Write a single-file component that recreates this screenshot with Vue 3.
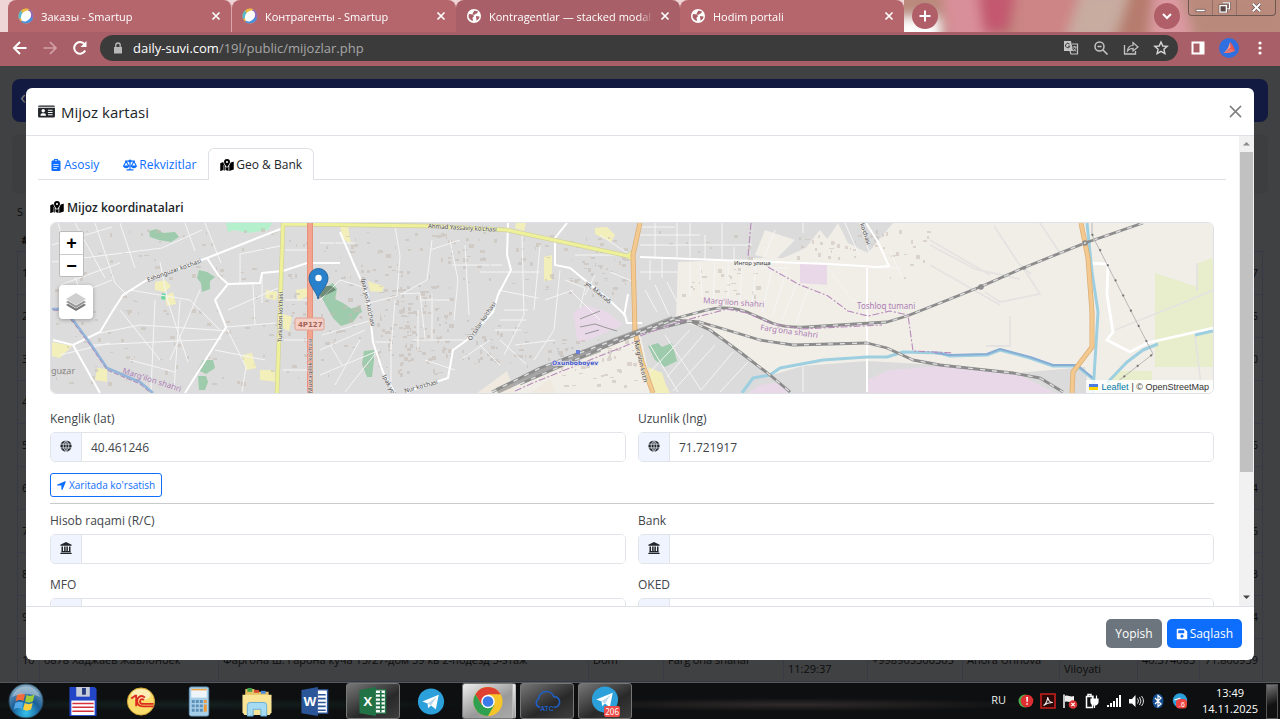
<script setup>
import { ref } from 'vue'

const tabs = [
  { title: 'Заказы - Smartup', icon: 'ring' },
  { title: 'Контрагенты - Smartup', icon: 'ring' },
  { title: 'Kontragentlar — stacked modal (', icon: 'globe', active: true },
  { title: 'Hodim portali', icon: 'globe' },
]

const lastDigits = ['7', '5', '0', '', '6', '4', '6', '3', '4']

const lat = ref('40.461246')
const lng = ref('71.721917')
const account = ref('')
const bank = ref('')
const mfo = ref('')
const oked = ref('')

const glyphs = {
  card: 'M1.5 1.5h15A1.5 1.5 0 0 1 18 3H0a1.5 1.5 0 0 1 1.500-1.500zM0 4h18v9a1.500 1.500 0 0 1-1.500 1.500h-15A1.500 1.500 0 0 1 0 13zM5.500 5.300a1.900 1.900 0 1 0 0 3.800 1.900 1.900 0 0 0 0-3.800zM2.500 12.500h6c0-1.700-1-2.600-2.200-2.600H4.700c-1.200 0-2.200.9-2.200 2.600zM10.500 6v1.200h5V6zm0 2.400v1.200h5V8.400zm0 2.400V12h5v-1.200z',
  clip: 'M5 2a3 3 0 0 1 6 0h1.500A1.500 1.500 0 0 1 14 3.500v11a1.500 1.500 0 0 1-1.500 1.500h-9A1.500 1.500 0 0 1 2 14.500v-11A1.500 1.500 0 0 1 3.500 2zm3-1a1 1 0 1 0 0 2 1 1 0 0 0 0-2zM4.500 7v1h7V7zm0 2.700v1h7v-1zm0 2.700v1h5v-1z',
  map: 'M9 0a4 4 0 0 1 4 4c0 1.800-2.400 5-3.500 6.300a.6.6 0 0 1-1 0C7.400 9 5 5.800 5 4a4 4 0 0 1 4-4zm0 2.600a1.400 1.400 0 1 0 0 2.800 1.400 1.400 0 0 0 0-2.800zM0 5.500l4-1.600c.2 1.700 1.100 3.200 2 4.600v7L4.500 15V8L4 7.500v7L.6 16a.5.5 0 0 1-.6-.5zM7 10c1.200 1.800 2.800 1.800 4 0v6l-4-1.200zM12 8.500c.8-1.300 1.500-2.400 1.900-3.700l3.500-1.300a.5.5 0 0 1 .6.500v10L12 16z',
  bank: 'M8 0l7.500 3.500V5H.5V3.500zM2 6h2v6h1.500V6h2v6h1V6h2v6H12V6h2v6.500l1 1V14H1v-.5l1-1zM.5 14.600h15V16H.5z',
  arrow: 'M15.600 1.700L10 15.200c-.5 1.200-2.200.8-2.200-.5V8.200H1.300c-1.300 0-1.700-1.700-.5-2.200L14.300.4c.9-.3 1.700.5 1.300 1.300z',
  save: 'M2.300 1h9l3.700 3.700v9A1.300 1.300 0 0 1 13.700 15H2.300A1.300 1.300 0 0 1 1 13.700V2.300A1.300 1.300 0 0 1 2.300 1zM3 3v4h8V3zm5 5.800a2.100 2.100 0 1 0 0 4.200 2.100 2.100 0 0 0 0-4.200z',
}

// Small repeatable noise for the building footprints on the map.
let seed = 41
const rand = () => {
  seed = (seed * 16807) % 2147483647
  return seed / 2147483647
}
const blocks = [
  [55, 226, 220, 160, 120],
  [285, 230, 24, 155, 25],
  [320, 232, 45, 150, 50],
  [375, 285, 75, 90, 150],
  [365, 232, 130, 50, 60],
  [510, 235, 115, 60, 70],
  [460, 320, 70, 45, 40],
  [545, 335, 90, 50, 60],
  [640, 228, 110, 30, 10],
  [678, 268, 80, 28, 26],
  [795, 230, 100, 28, 30],
  [870, 230, 60, 50, 20],
]
const buildings = blocks.flatMap(([x, y, w, h, n]) =>
  Array.from({ length: n }, () => ({
    x: Math.round(x + rand() * w),
    y: Math.round(y + rand() * h),
    w: Math.round(1 + rand() * 4),
    h: Math.round(1 + rand() * 3),
  })),
)

const lanes = [
  'M58 223l12 40 18 50M75 223l30 55M95 223l20 60 12 12M120 223l15 45M52 245l60-18M52 262l110-14 40-18M60 285l60-22M62 300l50-20M185 223l10 28M205 223l16 40M160 262l8 40 20 60M130 290l60 10 30 30M100 333l40-8 90 6M92 345l130-6M155 300l-4 90M120 310l40 50M180 300l-6 90M200 290l-30 70M226 327l50-4M226 327l20 40-4 25M215 350l50 10M228 310l50-22M240 284v-30l40-8M253 284l2 40M262 273v30M130 360l45 12M60 355l50-12',
  'M285 250h25M285 300h24M284 340h25M283 370h26M320 243h35M320 300l20-20 26 8M322 335l50-15M320 350l45-20M320 375l60-25M335 385l25-45M345 392l30-38M330 345l12 20',
  'M395 226l5 30-3 40-32 8M432 240l-5 40-25 14M450 240l8 40-4 40M465 245l4 70M400 294l20-1 5 45M420 300h30M413 340h55M418 310v40M432 294v45M375 342h16v40M395 300l-4 50M430 250l30-10M452 265h50M425 360l30 10M480 272h60M522 235l2 80-20 40M540 245l-6 65M498 290l40 8M504 310h24M500 320h26M495 330h26M560 270l-6 60-20 30M565 280l20 8-5 20M570 290l30 30M545 300l28-10M575 255h55M600 235l30 20M610 272l24 10M595 275l-10 20M480 345l20 20M500 340l26 24M515 345l40-5M460 360l30-20',
  'M640 227h35M640 235h60M640 245h112M655 223v34M677 223v34M690 223v34M705 235v24M722 223v36M734 247v14M640 272h38M650 260v20M662 258v20M645 290l12 22M655 285l14 30M667 282l10 20M650 345l28 47M665 335l36 55M690 330l-40 42M703 335l-36 42M715 345l-42 46M733 352l-32 38M748 362l-28 30',
  'M690 262v35M700 262l2 35M715 262l-2 36M728 262v36M742 262l-2 40M756 262l-4 44M772 268l-10 44M786 272l-14 46M798 280l-16 40M808 290l-12 33M760 268h30M845 223l14 32M860 223l10 32M803 223v10M775 230l-12 30M828 268l24 32 16 6M803 366v26M890 250l12 28M870 268h30',
]
const tracts = [
  'M994 226l25 38 12 10M1040 223l20 30M930 240l60 35M930 265l70 40M985 292l15 10 40-8-18-28M1010 316v30h-24M1115 330l70-28 28-12M1197 263v28M1195 335l6 50M930 245l45 24 45 10',
]
const rails = [
  'M492 392L540 368 593 348 640 331 673 319 707 310Q727 305 747 312L772 323Q785 328 807 327L887 322 907 316 940 303 980 287 1023 268 1085 243 1143 223',
  'M520 384L600 349 673 320 700 322 727 330 760 340 793 345 867 343 887 348 913 360 940 365 1013 373 1040 378 1063 392',
  'M640 333L690 321 710 330 740 352 770 375 790 392',
]
</script>

<template>
  <div class="screen">
    <header class="strip">
      <svg class="art" viewBox="0 0 380 32" preserveAspectRatio="none" aria-hidden="true">
        <defs><filter id="soft"><feGaussianBlur stdDeviation="6" /></filter></defs>
        <path d="M0 0h380v32H0z" fill="#c08d80" />
        <g filter="url(#soft)">
          <path d="M-10-10h400v52h-400z" fill="#b98a7c" />
          <path d="M-10 18h46v30h-46z" fill="#fff" />
          <path d="M38-10h45l10 52H44z" fill="#d98f99" />
          <path d="M74-10h40l-8 44H80z" fill="#c3596f" />
          <path d="M112-10h90v52h-90z" fill="#cd8585" />
          <path d="M180-10h50l-20 52h-48z" fill="#c8aca0" />
          <path d="M228-10h24l-10 52h-22z" fill="#b67a6c" />
          <path d="M252-10h26l16 52h-46z" fill="#dc9aa1" />
        </g>
      </svg>
      <nav class="tabs" aria-label="Tabs">
        <div v-for="t in tabs" :key="t.title" class="tab" :class="{ active: t.active }">
          <svg v-if="t.icon === 'ring'" class="fav" viewBox="0 0 16 16" aria-hidden="true">
            <circle cx="8" cy="8" r="7.500" fill="#e8b94a" />
            <path d="M8 .5A7.500 7.500 0 0 1 15.500 8c0 3-2 5.500-4 6.500z" fill="#8d63b5" />
            <path d="M15 10A7.500 7.500 0 0 1 3 13.700L8 8z" fill="#4b8fe0" />
            <path d="M4 1.700A7.500 7.500 0 0 0 1 11l7-3z" fill="#58b7c9" />
            <path d="M3 3.200A7.500 7.500 0 0 1 11 1L8 8z" fill="#f0b93e" />
            <ellipse cx="8" cy="8" rx="4.600" ry="6" transform="rotate(38 8 8)" fill="#fff" />
          </svg>
          <svg v-else class="fav" viewBox="0 0 16 16" aria-hidden="true">
            <circle cx="8" cy="8" r="7" fill="#fff" />
            <path d="M3 6l4 .5 1 2-1.500 1 .5 3.500C4 12.500 2.500 10 2.500 8zM8.500 2.500l3.500 1-1 2-2 .5-1 1.500-1.500-2zM10 8l3.500.5c0 2-1.500 3.500-3 4z" fill="#a95f67" />
          </svg>
          <span class="tab-title">{{ t.title }}</span>
          <button class="icon-btn tab-x" aria-label="Close tab">
            <svg viewBox="0 0 10 10"><path d="M1.500 1.500l7 7m0-7l-7 7" stroke="#fff" stroke-width="1.700" /></svg>
          </button>
        </div>
      </nav>
      <button class="round" aria-label="New tab">
        <svg viewBox="0 0 14 14"><path d="M7 1.500v11M1.500 7h11" stroke="#fff" stroke-width="2" /></svg>
      </button>
      <span class="grow"></span>
      <button class="round search" aria-label="Search tabs">
        <svg viewBox="0 0 14 14"><path d="M3 5l4 4 4-4" stroke="#fff" stroke-width="2" fill="none" /></svg>
      </button>
      <div class="win">
        <button aria-label="Minimize"><svg viewBox="0 0 14 12"><path d="M2 8h10v2.500H2z" fill="#fff" stroke="#5b4744" stroke-width=".7" /></svg></button>
        <button aria-label="Restore"><svg viewBox="0 0 14 12"><path d="M5 1h7.500v6.500H10M2 4h7v7H2zM4.500 6.500h2v2h-2z" fill="none" stroke="#5b4744" stroke-width="2.600" /><path d="M5 1h7.500v6.500H10M2 4h7v7H2z" fill="none" stroke="#fff" stroke-width="1.400" /></svg></button>
        <button class="wide" aria-label="Close"><svg viewBox="0 0 14 12"><path d="M3 2l8 8m0-8l-8 8" stroke="#5b4744" stroke-width="3.600" /><path d="M3 2l8 8m0-8l-8 8" stroke="#fff" stroke-width="2.200" /></svg></button>
      </div>
    </header>

    <div class="toolbar">
      <button class="icon-btn" aria-label="Back"><svg viewBox="0 0 16 16"><path d="M14.500 8H2.500M8 2L2 8l6 6" fill="none" stroke="#fff" stroke-width="2" /></svg></button>
      <button class="icon-btn" aria-label="Forward"><svg viewBox="0 0 16 16"><path d="M1.500 8h12M8 2l6 6-6 6" fill="none" stroke="#d2a1a5" stroke-width="1.700" /></svg></button>
      <button class="icon-btn" aria-label="Reload"><svg viewBox="0 0 16 16"><path d="M13.200 10.500A5.800 5.800 0 1 1 12.500 4.200" fill="none" stroke="#fff" stroke-width="2" /><path d="M14.500 1v6h-6z" fill="#fff" /></svg></button>
      <div class="address">
        <svg class="lock" viewBox="0 0 10 12"><path d="M1 5h8v6.500H1z" fill="#b9b9b9" /><path d="M2.800 5V3.200a2.200 2.200 0 0 1 4.400 0V5" fill="none" stroke="#b9b9b9" stroke-width="1.300" /></svg>
        <span class="url"><b>daily-suvi.com</b>/19l/public/mijozlar.php</span>
        <span class="grow"></span>
        <button class="icon-btn" aria-label="Translate"><svg viewBox="0 0 16 16"><path d="M1 1h7l2 10H1z" fill="#c4c4c4" /><path d="M6.500 4.200a2.200 2.200 0 1 0 .4 2H5" fill="none" stroke="#3b3b3b" stroke-width="1" /><path d="M9 4h5.500v10H8l-1-3" fill="none" stroke="#c4c4c4" stroke-width="1.200" /><path d="M9.500 7h4m-2-1v1m1.500 0c0 2-1.500 3.500-3 4m.5-2.500l2.500 3" stroke="#c4c4c4" fill="none" /></svg></button>
        <button class="icon-btn" aria-label="Zoom"><svg viewBox="0 0 16 16"><circle cx="6.500" cy="6.500" r="4.500" fill="none" stroke="#c4c4c4" stroke-width="1.500" /><path d="M4.500 6.500h4M10 10l4.500 4.500" stroke="#c4c4c4" stroke-width="1.600" /></svg></button>
        <button class="icon-btn" aria-label="Share"><svg viewBox="0 0 16 16"><path d="M1.500 5v9h11v-3" fill="none" stroke="#c4c4c4" stroke-width="1.300" /><path d="M4.500 11c.3-4 2.500-5.500 5.500-5.500V2.500L15 7l-5 4V8.300c-2.500 0-4 .7-5.500 2.700z" fill="none" stroke="#c4c4c4" stroke-width="1.200" /></svg></button>
        <button class="icon-btn" aria-label="Bookmark"><svg viewBox="0 0 16 16"><path d="M8 2l1.800 4 4.400.4-3.300 2.900 1 4.300L8 11.300l-3.900 2.300 1-4.300L1.800 6.400l4.400-.4z" fill="none" stroke="#d6d6d6" stroke-width="1.400" /></svg></button>
      </div>
      <button class="icon-btn" aria-label="Side panel"><svg viewBox="0 0 16 16"><path d="M1.500 1.500h13v13h-13zM3.500 3.500v9h6v-9z" fill="#fff" fill-rule="evenodd" /></svg></button>
      <button class="icon-btn avatar" aria-label="Profile"><svg viewBox="0 0 20 20"><circle cx="10" cy="10" r="10" fill="#2f6fe0" /><path d="M11 4l1 6-7 5c1-2 3-3 4-5z" fill="#f6978c" /><path d="M11 4c3 2 4 6 5 9l-7-1 3-3z" fill="#e8554f" /><path d="M4 15l8-4 4 2-6 2z" fill="#ee7469" /></svg></button>
      <button class="icon-btn" aria-label="Menu"><svg viewBox="0 0 16 16" fill="#fff"><circle cx="8" cy="3" r="1.600" /><circle cx="8" cy="8" r="1.600" /><circle cx="8" cy="13" r="1.600" /></svg></button>
    </div>

    <main class="page">
      <div class="topbar"><span>‹</span></div>
      <div class="card"></div>
      <div class="list">
        <div class="found">S</div>
        <table>
          <colgroup><col v-for="n in 11" :key="n" :class="'c' + n" /></colgroup>
          <thead><tr><th>#</th><th v-for="n in 10" :key="n"></th></tr></thead>
          <tbody>
            <tr v-for="(d, i) in lastDigits" :key="i">
              <td>{{ i + 1 }}</td>
              <td v-for="n in 9" :key="n"></td>
              <td class="num">{{ d }}</td>
            </tr>
            <tr>
              <td>10</td><td>0878 Хаджаев Жавлонбек</td><td>Фаргона ш. Гарона куча 15/27-дом 59 кв 2-подезд 3-этаж</td><td>Dom</td><td>Farg'ona shahar</td>
              <td><br />11:29:37</td><td>+998905306305</td><td>Anora Urinova</td><td><br />Viloyati</td><td>40.374083</td><td class="num">71.800939</td>
            </tr>
          </tbody>
        </table>
      </div>

      <section class="modal" role="dialog" aria-labelledby="modal-title">
        <div class="modal-head">
          <svg class="g-card" viewBox="0 0 18 16"><path :d="glyphs.card" fill-rule="evenodd" /></svg>
          <h1 id="modal-title">Mijoz kartasi</h1>
          <button class="icon-btn close" aria-label="Close"><svg viewBox="0 0 14 14"><path d="M1.500 1.500l11 11m0-11l-11 11" stroke="#808080" stroke-width="1.700" stroke-linecap="round" /></svg></button>
        </div>

        <div class="modal-body">
          <div class="content">
            <div class="pills" role="tablist">
              <button role="tab"><svg class="g" viewBox="0 0 16 16"><path :d="glyphs.clip" fill-rule="evenodd" /></svg>Asosiy</button>
              <button role="tab">
                <svg class="g-wide" viewBox="0 0 20 16" fill="none" stroke="currentColor" stroke-width="1.600"><path d="M3 2.500h14M10 2v12.500M5 15h10M.8 9.500L4.500 3l3.700 6.500zM11.800 9.500L15.500 3l3.700 6.500z" /><path d="M.5 9.500h8a4 3 0 0 1-8 0zM11.500 9.500h8a4 3 0 0 1-8 0z" fill="currentColor" stroke="none" /><circle cx="10" cy="2.400" r="1.400" fill="currentColor" /></svg>Rekvizitlar
              </button>
              <button role="tab" class="on" aria-selected="true"><svg class="g-wide" viewBox="0 0 18 16"><path :d="glyphs.map" fill-rule="evenodd" /></svg>Geo &amp; Bank</button>
            </div>

            <div class="pane">
              <h2><svg class="g-wide" viewBox="0 0 18 16"><path :d="glyphs.map" fill-rule="evenodd" /></svg>Mijoz koordinatalari</h2>
              <div class="map">
                <svg class="tiles" viewBox="51 223 1162 170" preserveAspectRatio="xMidYMid slice" role="img" aria-label="Map">
                  <path d="M51 223h1162v170H51z" fill="#f1eee8" />
                  <path d="M51 223h702l-3 36-72 3-2 56-36 15-100 40-50 20H51z" fill="#dcdcdc" />
                  <path d="M753 223h85l-10 15-45 20h-33zM838 223h55l-25 30-20-10zM640 332l33-13 40 12 77 62H653zM742 393l30-18 31-9 64-5 73 4 75 8 70-6 4 26z" fill="#dbdbdb" />
                  <path d="M765 230l30 10-20 20-20-5zM820 230l20 25h-40z" fill="#f1eee8" />
                  <path d="M477 393l30-22 8 22zM530 393l20-14 6 14z" fill="#efe9df" />
                  <path d="M867 380l23-10 50-4 80 9 35 18H867zM800 263l27 2v20l-27-2zM573 312l14-7 20 7 16 13-30 13-15 5zM760 385l20-3 8 11h-40z" fill="#e9d9e8" />
                  <path d="M1155 273l42 14 1-24 15-5v109h-58zM1117 371h35v22h-50z" fill="#e8eecb" />
                  <g fill="#9dcbab"><path d="M149 231l8-2 6 4 12-1 4 5-8 5-12-2-9-3zM199 270l8 2 8 5-5 4v8l-8 3-1-9-4-5zM203 360h10l2 8-9 6-8-4zM198 376h8l2 6-3 8h-6zM318 291l15-8 4 6-2 10 8 4 16 11-6 8-12 4-8-8zM340 312l20-6 2 6-14 8-8 2zM364 351l10-1v10l-2 17h-5l-5-13zM648 346l10-3 4 4 10-4 5 18-12 6-10-7z" /></g>
                  <path d="M226 223l46 0-4 7-20 3-14-3-6 2z" fill="#b5f0cd" />
                  <g fill="#f3efba"><path d="M52 342l20 4-12 12-8-2zM155 282l10-2 6 6-6 6-10-2zM165 296l8-4 3 12-9 2zM97 368l10 1v13l-12-2zM242 355l10-2 4 15-10 2zM266 290l12 2-2 8-11-2zM296 290l12-2v8l-10 5zM283 314l9 3-3 14-7-3zM260 370h14l4 12-18-2zM368 281l8 3 8 2-2 6-12-1zM544 257l8-2v25l-8 1zM595 228l12-1 8 8-4 7-16-8zM516 223h10l-2 8-9-3zM340 226h8l3 18-8-5zM648 367l14 6 4 12 4 8h-16z" /></g>
                  <path d="M162 293l4 1-1 6-4-1z" fill="#6ed6a2" />

                  <g fill="#c8bdb5" opacity=".55"><rect v-for="(b, i) in buildings" :key="i" :x="b.x" :y="b.y" :width="b.w" :height="b.h" /></g>
                  <g fill="none" stroke="#f5f5f5" stroke-width="1"><path v-for="(d, i) in lanes" :key="i" :d="d" /></g>
                  <g fill="none" stroke="#e4e3e1" stroke-width="1.800"><path v-for="(d, i) in tracts" :key="i" :d="d" /></g>
                  <g fill="none" stroke="#fff" stroke-width="2">
                    <path d="M283 228L207 258 147 280 123 295 112 312 100 332 73 345 53 340M73 345l27 48M340 263h-33l-24 8-21 2-2 10-32 1-13 16 11 27-41 66M207 258l12 18 9 8" />
                    <path d="M340 232l15 35 13 28 5 47 10 30 12 21M508 223l-1 32 4 15-13 25-5 17-26 28-14 10-5 28-41 14M567 223l-12 15v27l15 3 37 30 18 17 2 8h15M628 294l-4 22M640 257l160 6 30 1 47 3 12-1-11-24-12-19M867 268v124" />
                    <path d="M1088 263l20 1-1 31 6 37-6 8 23 12 17-9 66-15" stroke-width="2.800" />
                  </g>

                  <g fill="none" stroke-linejoin="round">
                    <path d="M52 309l10 0 11 11 17 23 17 25 33 14 13 11" stroke="#93b5da" stroke-width="2.500" />
                    <path d="M53 310l9 1 11 11 17 23 17 25 33 14 13 11" stroke="#ad8bb7" stroke-width="1" stroke-dasharray="5 2" />
                    <path d="M742 393l11-15 17-3 10-7 43-8 44-3h20l16-5 37 1 10 3 37-1 13-5 30 8 23 8h24l16 13" stroke="#9dcfe0" stroke-width="3" />
                    <path d="M935 353l15 2 37-1 13-5 30 8 23 8h24l16 13" stroke="#88add5" stroke-width="2" />
                    <path d="M1087 223l5 49 6 40-5 81M1107 383l20-21 16-12 15-6M1195 335l18-4" stroke="#9dcfe0" stroke-width="3" />
                    <path d="M277 393l5-140 1-29 147 2 77 4 121 26 5-4m-5 4l5 4" stroke="#d0d19a" stroke-width="4.500" />
                    <path d="M277 393l5-140 1-29 147 2 77 4 121 26 5-4m-5 4l5 4" stroke="#eff09a" stroke-width="3.200" />
                    <path d="M310 223v170" stroke="#e58d78" stroke-width="6" />
                    <path d="M310 223v170" stroke="#f3a48f" stroke-width="4.500" />
                    <path d="M640 223l-7 32 2 77 7 30 11 31M1081 223l7 35 4 54v35l-19 25-1 21" stroke="#d9ac73" stroke-width="5" />
                    <path d="M640 223l-7 32 2 77 7 30 11 31M1081 223l7 35 4 54v35l-19 25-1 21" stroke="#f3c98f" stroke-width="3.600" />
                    <path d="M497 391l45-21 51-21 80-30M540 372l60-23" stroke="#777" stroke-width="6" opacity=".55" />
                    <g stroke="#8c8c8c" stroke-width="2.800"><path v-for="(d, i) in rails" :key="i" :d="d" /></g>
                    <g stroke="#dedede" stroke-width="1.400" stroke-dasharray="5 7"><path v-for="(d, i) in rails" :key="i" :d="d" /></g>
                    <path d="M580 327l15-3 12 4 10 3M585 334l14-4M580 319l20-8" stroke="#999" stroke-width="1" />
                    <path d="M751 223l-3 34M768 267l30 17 30 12 20 15 20 5 22-5 18 4 5 36 40 2M515 391l20-9 105-42M640 336l35-13 52-14 20 4 25 11 30 5 80-4" stroke="#b78abb" stroke-width="1.100" stroke-dasharray="7 2 2 2" />
                    <path d="M1092 223v12l61 119-36 28" stroke="#aaa" stroke-width=".8" />
                    <path d="M1092 234l61 120-36 28" stroke="#777" stroke-width="2" stroke-dasharray="2 15" />
                  </g>
                  <g fill="none" stroke="#888" stroke-width="1.500"><circle cx="1085" cy="243" r="2" /><circle cx="981" cy="287" r="2" /><circle cx="1024" cy="268" r="1" /></g>

                  <g class="street">
                    <text transform="translate(148 282) rotate(-20)">Eshonguzar ko'chasi</text>
                    <text transform="translate(428 228) rotate(3)">Ahmad Yassaviy ko'chasi</text>
                    <text transform="translate(282 342) rotate(-89)">Turkiston ko'chasi</text>
                    <text transform="translate(312 393) rotate(-90)">Mustaqillik ko'chasi</text>
                    <text transform="translate(361 279) rotate(78)">Ipak yo'li ko'chasi</text>
                    <text transform="translate(382 376) rotate(62)">Ipak yo'</text>
                    <text transform="translate(471 341) rotate(-56)">O'rtalar ko'chasi</text>
                    <text transform="translate(405 393) rotate(-16)">Nur ko'chasi</text>
                    <text transform="translate(585 284) rotate(40)">ул. Мактаб</text>
                    <text x="734" y="265">Ингор улица</text>
                    <text transform="translate(634 341) rotate(77)">Marg'ilon ko'ch</text>
                    <text transform="translate(860 224) rotate(72)">ko'chasi</text>
                  </g>
                  <g class="area">
                    <text transform="translate(122 373) rotate(18)">Marg'ilon shahri</text>
                    <text transform="translate(703 303) rotate(4)">Marg'ilon shahri</text>
                    <text transform="translate(760 330) rotate(8)">Farg'ona shahri</text>
                    <text x="857" y="309">Toshloq tumani</text>
                  </g>
                  <text x="51" y="374" class="place">guzar</text>
                  <text x="552" y="365" class="station">Oxunboboyev</text>
                  <path d="M576 350h4v4h-4z" fill="#6a7fdc" />
                  <rect x="295" y="318" width="29" height="12" rx="2" fill="#f5cfc6" stroke="#dfa394" />
                  <text x="298" y="327" class="shield">4P127</text>
                  <path d="M318 299l6-13 8 0 4 4z" fill="#000" opacity=".3" />
                  <path d="M318 299c-1-7-9-13-9-21a9.500 9.500 0 0 1 19 0c0 8-9 14-10 21z" fill="#2a81cb" stroke="#2568a3" />
                  <circle cx="318.500" cy="278" r="3.200" fill="#fff" />
                </svg>
                <div class="controls">
                  <div class="zoom"><button aria-label="Zoom in">+</button><button aria-label="Zoom out">−</button></div>
                  <button class="layers" aria-label="Layers">
                    <svg viewBox="0 0 24 24"><path d="M2 15l10 6 10-6-2-1.200-8 4.700-8-4.700z" fill="#777" /><path d="M2 12l10 6 10-6-2-1.200-8 4.700-8-4.700z" fill="#999" /><path d="M12 3l10 6-10 6L2 9z" fill="#cfcfcf" /></svg>
                  </button>
                </div>
                <div class="credit">
                  <svg viewBox="0 0 12 8"><path d="M0 0h12v4H0z" fill="#4c7be1" /><path d="M0 4h12v4H0z" fill="#ffd500" /></svg>
                  <a href="#">Leaflet</a> | © OpenStreetMap
                </div>
              </div>

              <div class="fields coords">
                <div class="field">
                  <label for="lat">Kenglik (lat)</label>
                  <div class="group"><span><svg class="g" viewBox="0 0 16 16"><circle cx="8" cy="8" r="7.500" /><path d="M0 5.500h16M0 10.500h16M8 0v16M8 .5c-5 5-5 10 0 15 5-5 5-10 0-15" fill="none" stroke="#f0f4ff" stroke-width="1" /></svg></span><input id="lat" v-model="lat" /></div>
                </div>
                <div class="field">
                  <label for="lng">Uzunlik (lng)</label>
                  <div class="group"><span><svg class="g" viewBox="0 0 16 16"><circle cx="8" cy="8" r="7.500" /><path d="M0 5.500h16M0 10.500h16M8 0v16M8 .5c-5 5-5 10 0 15 5-5 5-10 0-15" fill="none" stroke="#f0f4ff" stroke-width="1" /></svg></span><input id="lng" v-model="lng" /></div>
                </div>
              </div>
              <button class="outline"><svg class="g-small" viewBox="0 0 16 16"><path :d="glyphs.arrow" /></svg>Xaritada ko'rsatish</button>
              <hr />
              <div class="fields">
                <div class="field">
                  <label for="acc">Hisob raqami (R/C)</label>
                  <div class="group"><span><svg class="g" viewBox="0 0 16 16"><path :d="glyphs.bank" /></svg></span><input id="acc" v-model="account" /></div>
                </div>
                <div class="field">
                  <label for="bank">Bank</label>
                  <div class="group"><span><svg class="g" viewBox="0 0 16 16"><path :d="glyphs.bank" /></svg></span><input id="bank" v-model="bank" /></div>
                </div>
                <div class="field">
                  <label for="mfo">MFO</label>
                  <div class="group"><span></span><input id="mfo" v-model="mfo" /></div>
                </div>
                <div class="field">
                  <label for="oked">OKED</label>
                  <div class="group"><span></span><input id="oked" v-model="oked" /></div>
                </div>
              </div>
            </div>
          </div>
          <div class="scroll" aria-hidden="true">
            <svg viewBox="0 0 15 15"><path d="M4 9l3.500-3.500L11 9z" fill="#8a8a8a" /></svg>
            <i></i>
            <span class="grow"></span>
            <svg viewBox="0 0 15 15"><path d="M4 5l3.500 3.500L11 5z" fill="#444" /></svg>
          </div>
        </div>

        <div class="modal-foot">
          <button class="btn grey">Yopish</button>
          <button class="btn blue"><svg class="g" viewBox="0 0 16 16"><path :d="glyphs.save" fill-rule="evenodd" /></svg>Saqlash</button>
        </div>
      </section>
    </main>

    <footer class="taskbar">
      <button class="start" aria-label="Start">
        <svg viewBox="0 0 36 36">
          <defs><radialGradient id="orb" cx=".5" cy=".85" r=".9"><stop offset="0" stop-color="#35c3ee" /><stop offset=".45" stop-color="#1a5f99" /><stop offset="1" stop-color="#8fb0c4" /></radialGradient></defs>
          <circle cx="18" cy="18" r="17" fill="url(#orb)" stroke="#29465b" />
          <path d="M9 12c3-2 5-2 8-.5l-1.500 6.500c-3-1.500-5-1.300-8 .3z" fill="#ef6c3a" /><path d="M18.500 12c3 1.500 5 1.300 8-.4L25 18.200c-3 1.700-5 1.700-8 .3z" fill="#9ccb3b" /><path d="M7.200 20c3-1.700 5-1.700 8-.3L13.700 26c-3-1.500-5-1.200-8 .4z" fill="#54a9e8" /><path d="M16.700 20c3 1.500 5 1.500 8 0L23 26.500c-3 1.500-5 1.500-8 0z" fill="#fbd03c" />
          <path d="M4 14a14.500 14.500 0 0 1 28 0c-8-4-20-4-28 0z" fill="#fff" opacity=".35" />
        </svg>
      </button>
      <button class="task" aria-label="Total Commander"><svg viewBox="0 0 32 32"><path d="M2 1h26l2 2v28H2z" fill="#2346c8" /><path d="M9 1h14v10H9z" fill="#c7cdd9" /><path d="M15 2h4v7h-4z" fill="#273a80" /><path d="M4 15h24v15H4z" fill="#fff" /><path d="M5 18h22M5 22h22M5 26h22" stroke="#d6323e" stroke-width="1.500" /></svg></button>
      <button class="task" aria-label="1C"><svg viewBox="0 0 32 32"><circle cx="16" cy="16" r="14" fill="#f9dc69" stroke="#d9a93a" /><ellipse cx="16" cy="9" rx="10" ry="6" fill="#fff" opacity=".5" /><path d="M6 13l4-3h1v11M20 12c-4-4-8 0-8 3.500 0 4 3 5.500 6 5.500h11M19 14.500c-2-2-4-.5-4 1.500s1.500 2.500 3 2.500h11" fill="none" stroke="#dc2c20" stroke-width="1.900" /></svg></button>
      <button class="task" aria-label="Calculator"><svg viewBox="0 0 32 32"><rect x="6" y="1" width="20" height="30" rx="2" fill="#a8cfe8" stroke="#6d9fc3" /><path d="M8 4h16v8H8z" fill="#eef5fa" /><path d="M8 3h16v1.500H8z" fill="#f0a546" /><path d="M8.500 14.500h3v3h-3zm4.200 0h3v3h-3zm4.200 0h3v3h-3zM8.500 19h3v3h-3zm4.200 0h3v3h-3zm4.200 0h3v3h-3zM8.500 23.500h3v3h-3zm4.200 0h3v3h-3zm4.200 0h3v3h-3z" fill="#5d8fb8" /><path d="M21 14.500h3v3h-3zM21 19h3v7.500h-3z" fill="#ee9a3b" /></svg></button>
      <button class="task" aria-label="Explorer"><svg viewBox="0 0 32 32"><path d="M4 3h9l2 3h13v22H3z" fill="#e6c265" /><path d="M6 2h5v4H6z" fill="#3f9d4b" /><path d="M13 4h5v3h-5z" fill="#d64c32" /><path d="M20 5h5v3h-5z" fill="#4a8edb" /><path d="M1 9h30v18l-2 3H3l-2-3z" fill="#fae596" /><path d="M6 31V20q0-3 3-3h14q3 0 3 3v11h-6v-7h-8v7z" fill="#a5daf3" stroke="#67aed6" /></svg></button>
      <button class="task" aria-label="Word"><svg viewBox="0 0 32 32"><path d="M16 4h13v24H16z" fill="#fff" stroke="#2b579a" stroke-width="1.500" /><path d="M19 9h8M19 13h8M19 17h8M19 21h8M19 25h8" stroke="#2b579a" stroke-width="1.700" /><path d="M2 4l17-3v30L2 28z" fill="#2b579a" /><text x="4" y="21" class="logo">W</text></svg></button>
      <button class="task open" aria-label="Excel"><svg viewBox="0 0 32 32"><path d="M16 4h13v24H16z" fill="#fff" stroke="#217346" stroke-width="1.500" /><path d="M19 8h9M19 12h9M19 16h9M19 20h9M19 24h9M24 5v22" stroke="#217346" stroke-width="1.700" /><path d="M2 4l17-3v30L2 28z" fill="#217346" /><text x="6" y="21" class="logo">X</text></svg></button>
      <button class="task" aria-label="Telegram"><svg viewBox="0 0 32 32"><circle cx="16" cy="16" r="13.500" fill="#2ba0da" /><path d="M7 16l17-7-3 15-5-4-3 3-.5-5z" fill="#fff" /><path d="M12.500 18L22 11l-6 9" fill="#b9d9ec" /></svg></button>
      <button class="task open lit" aria-label="Chrome"><svg viewBox="0 0 32 32"><circle cx="16" cy="16" r="15" fill="#f6c52b" /><path d="M3 8.500A15 15 0 0 1 29 8.500H16l-6.500 11z" fill="#df4132" /><path d="M3 8.500A15 15 0 0 0 16 31l6.500-11.500h-13z" fill="#2fa04f" /><circle cx="16" cy="16" r="7" fill="#fff" /><circle cx="16" cy="16" r="5.500" fill="#3a7be9" /></svg></button>
      <button class="task open" aria-label="Cloud ERP"><svg viewBox="0 0 32 32"><path d="M9 22H8a5 5 0 0 1-.5-9A8 8 0 0 1 23 11a5.500 5.500 0 0 1 1 11h-1" fill="none" stroke="#1f5fc4" stroke-width="1.600" /><text x="9" y="26" class="cloud">ATC</text></svg></button>
      <button class="task open" aria-label="Telegram unread"><svg viewBox="0 0 32 32"><circle cx="16" cy="14" r="13.500" fill="#2ba0da" /><path d="M7 14l17-7-3 15-5-4-3 3-.5-5z" fill="#fff" /><path d="M12.500 16L22 9l-6 9" fill="#b9d9ec" /></svg><em>206</em></button>
      <span class="grow"></span>
      <span class="lang">RU</span>
      <div class="tray">
        <svg viewBox="0 0 16 16"><circle cx="7" cy="8" r="6.500" fill="#48b04c" /><circle cx="9" cy="8" r="6.300" fill="#df2e31" /><path d="M8.200 4h1.800l-.3 5H8.500zM8.300 10.200h1.500v1.600H8.300z" fill="#fff" /></svg>
        <svg viewBox="0 0 16 16"><path d="M1 1h14v14H1z" fill="#2b0707" stroke="#c8201e" stroke-width="1.600" /><path d="M3.500 12.500c2-1 4-5 4.300-8.500.5 4 2 5.500 5 5.500-3.500-.2-6 .5-9.300 3z" fill="none" stroke="#eee" stroke-width="1.100" /></svg>
        <svg viewBox="0 0 16 16"><path d="M2 1.500v13.500" stroke="#fff" stroke-width="1.500" /><path d="M3 3c3-1.500 5 1.500 9 0v6c-4 1.500-6-1.500-9 0z" fill="#eee" /><circle cx="11" cy="11.500" r="4.300" fill="#d93434" /><path d="M9.300 9.800l3.400 3.400m0-3.400l-3.400 3.400" stroke="#fff" stroke-width="1.200" /></svg>
        <svg viewBox="0 0 16 16"><path d="M2.500 3.500h6v11h-6zM4 1.500h3v2H4z" fill="none" stroke="#fff" stroke-width="1.500" /><path d="M7 6h7v3c0 2-2 3-3.500 3S7 11 7 9zM9 2.500v3M12.500 2.500v3M10.500 12v3" fill="#fff" stroke="#fff" stroke-width="1.200" /></svg>
        <svg viewBox="0 0 16 16" fill="#fff"><path d="M1 12h2v2H1zM4 10h2v4H4zM7 8h2v6H7zM10 5h2v9h-2zM13 2h2v12h-2z" /></svg>
        <svg viewBox="0 0 16 16"><path d="M1 6h3l3.500-4v12L4 10.500H1z" fill="#fff" /><path d="M9.500 5.500q2 2.500 0 5M11.500 4q3 4 0 8M13.500 3q4 5 0 10" fill="none" stroke="#ddd" /></svg>
        <svg viewBox="0 0 16 16"><ellipse cx="8" cy="8" rx="5.500" ry="7.300" fill="#174f93" /><path d="M5 5l6 6-3 2.500v-11L11 5l-6 6" fill="none" stroke="#fff" stroke-width="1.200" /></svg>
        <svg viewBox="0 0 16 16"><circle cx="8" cy="7.500" r="7.200" fill="#2ba0da" /><rect x="4" y="6" width="11" height="9.500" rx="3.500" fill="#ee4541" /><path d="M2.500 7l6-2" stroke="#fff" stroke-width="1.300" /><text x="7" y="13.500" class="mini">.6</text></svg>
      </div>
      <div class="clock"><span>13:49</span><span>14.11.2025</span></div>
      <button class="desk" aria-label="Show desktop"></button>
    </footer>
  </div>
</template>

<style>
body { margin: 0; background: #000; }
</style>

<style scoped>
* { box-sizing: border-box; }
.screen { height: 100vh; display: flex; flex-direction: column; overflow: hidden; font-family: "Open Sans", "Noto Sans", sans-serif; font-size: 12px; color: #212529; }
button { font: inherit; border: 0; padding: 0; background: none; color: inherit; }
svg { display: block; flex: none; }
.grow { flex: 1; }
.icon-btn { width: 16px; height: 16px; flex: none; }
.icon-btn svg { width: 100%; height: 100%; }

.strip { position: relative; height: 32px; flex: none; display: flex; align-items: center; padding-left: 8px; background: #efd5d5; }
.art { position: absolute; right: 0; top: 0; width: 376px; height: 32px; }
.tabs, .round, .win { position: relative; }
.tabs { display: flex; height: 32px; }
.tab { width: 224px; height: 32px; display: flex; align-items: center; padding: 0 10px; background: #b5666d; border-radius: 8px 8px 0 0; color: #fff; font-size: 11px; }
.tab.active { background: #a95f67; }
.tab:first-child { border-right: 1px solid #d9a7ab; }
.fav { width: 16px; height: 16px; margin-right: 7px; }
.tab-title { flex: 1; min-width: 0; overflow: hidden; white-space: nowrap; mask-image: linear-gradient(90deg, #000 90%, transparent); }
.tab-x { width: 10px; height: 10px; margin-left: 6px; }
.round { width: 26px; height: 26px; border-radius: 50%; background: #b05f68; display: grid; place-items: center; margin-left: 8px; }
.round svg { width: 14px; height: 14px; }
.search { margin-right: 8px; }
.win { align-self: flex-start; display: flex; height: 16px; margin-right: 4px; border: 1px solid #6f5751; border-top: 0; border-radius: 0 0 4px 4px; }
.win button { width: 24px; display: grid; place-items: center; border-right: 1px solid #8d716a; }
.win .wide { width: 38px; border: 0; }
.win svg { width: 13px; height: 11px; }

.toolbar { height: 34px; flex: none; display: flex; align-items: center; gap: 14px; padding: 0 12px 2px; background: #a95f67; }
.address { flex: 1; height: 26px; border-radius: 13px; background: #3b3b3b; display: flex; align-items: center; gap: 14px; padding: 0 9px; margin: 0 -2px; }
.lock { width: 10px; height: 12px; margin-left: 4px; }
.url { color: #a6a6a6; font-size: 13px; margin-left: -4px; }
.url b { color: #fff; font-weight: 400; }
.avatar { width: 20px; height: 20px; margin: 0 -1px; }

.page { position: relative; flex: 1; min-height: 0; overflow: hidden; background: #404142; padding: 13px 12px 0; color: #0c0d0e; }
.topbar { height: 43px; border-radius: 8px; background: #121a42; color: #777; padding-left: 8px; font-size: 20px; line-height: 36px; }
.card { height: 60px; margin-top: 12px; border-radius: 8px; background: #3d3e3f; }
.list { padding: 0 5px; height: 500px; }
.found { height: 35px; line-height: 35px; font-size: 11px; }
table { width: 100%; table-layout: fixed; border-collapse: collapse; font-size: 11px; line-height: 18px; }
th { height: 22px; padding: 0 4px; text-align: left; }
td { height: 43px; padding: 0 4px; border: 1px solid #373a46; white-space: nowrap; overflow: visible; }
.num { text-align: right; }
.c1 { width: 22px; } .c2 { width: 179px; } .c3 { width: 370px; } .c4 { width: 75px; } .c5 { width: 120px; } .c6 { width: 84px; } .c7 { width: 95px; } .c8 { width: 97px; } .c9 { width: 78px; } .c10 { width: 62px; }

.modal { position: absolute; inset: 22px 26px; display: flex; flex-direction: column; background: #fff; border-radius: 6px; color: #212529; overflow: hidden; }
.modal-head { height: 48px; flex: none; display: flex; align-items: center; gap: 6px; padding: 0 12px; border-bottom: 1px solid #dee2e6; }
.modal-head h1 { margin: 0; flex: 1; font-size: 15px; font-weight: 400; }
.g-card { width: 17px; height: 15px; }
.close { width: 13px; height: 13px; }
.modal-body { flex: 1; min-height: 0; display: flex; }
.content { flex: 1; min-width: 0; overflow: hidden; padding: 12px 13px 0 12px; }
.pills { display: flex; height: 32px; border-bottom: 1px solid #dee2e6; }
.pills button { display: flex; align-items: center; gap: 2px; padding: 0 11px; height: 32px; color: #0d6efd; border: 1px solid transparent; border-bottom: 0; white-space: nowrap; }
.pills .on { color: #212529; background: #fff; border-color: #dee2e6; border-radius: 6px 6px 0 0; }
.g { width: 12px; height: 12px; }
.g-wide { width: 14px; height: 12px; }
.g-small { width: 9px; height: 9px; }
svg.g, svg.g-small, svg.g-card { fill: currentColor; }
.pane { padding: 18px 12px 0; }
h2 { display: flex; align-items: center; gap: 3px; margin: 0; height: 18px; font-size: 12px; font-weight: 600; }
.map { position: relative; margin-top: 6px; height: 172px; border: 1px solid #dee2e6; border-radius: 6px; overflow: hidden; }
.tiles { width: 100%; height: 100%; }
.street text { font: 6px "Noto Sans", sans-serif; fill: #444; stroke: #eee; stroke-width: .6px; paint-order: stroke; }
.area text { font: 8px "Noto Sans", sans-serif; fill: #ad80b5; }
.place { font: 9px "Noto Sans", sans-serif; fill: #888; }
.station { font: 700 6px "DejaVu Sans", sans-serif; fill: #4e5fd0; stroke: #e4e4e4; stroke-width: 1.5px; paint-order: stroke; }
.shield { font: 700 7px "DejaVu Sans", sans-serif; fill: #a46358; }
.controls { position: absolute; left: 8px; top: 8px; display: flex; flex-direction: column; gap: 8px; }
.zoom { width: 25px; background: #fff; border: 1px solid #bbb; border-radius: 2px; }
.zoom button { display: block; width: 23px; height: 22px; font: 700 18px/22px "Liberation Sans", sans-serif; color: #000; }
.zoom button + button { border-top: 1px solid #ccc; }
.layers { width: 34px; height: 34px; background: #fff; border-radius: 4px; box-shadow: 0 1px 4px rgba(0, 0, 0, .3); display: grid; place-items: center; }
.layers svg { width: 24px; height: 24px; }
.credit { position: absolute; right: 0; bottom: 0; display: flex; align-items: center; gap: 3px; height: 13px; padding: 0 4px 0 3px; background: rgba(255, 255, 255, .8); color: #333; font: 9px "Liberation Sans", sans-serif; }
.credit svg { width: 9px; height: 6px; }
.credit a { color: #0078a8; text-decoration: none; }
.fields { display: grid; grid-template-columns: 1fr 1fr; gap: 12px; }
.coords { margin-top: 16px; }
.field label { display: block; height: 18px; line-height: 18px; margin-bottom: 4px; color: #41464b; }
.group { display: flex; height: 30px; border: 1px solid #e1e5ea; border-radius: 5px; overflow: hidden; }
.group span { width: 31px; flex: none; display: grid; place-items: center; padding-bottom: 2px; background: #f0f4ff; border-right: 1px solid #e1e5ea; }
.group input { flex: 1; min-width: 0; border: 0; outline: 0; padding: 0 9px; background: #fff; font: inherit; color: #41464b; }
.outline { display: flex; align-items: center; gap: 3px; height: 24px; margin-top: 11px; padding: 0 6px; border: 1px solid #0d6efd; border-radius: 3px; color: #0d6efd; font-size: 10px; }
hr { margin: 6px 0 8px; border: 0; border-top: 1px solid #c8cacc; }
.scroll { width: 15px; display: flex; flex-direction: column; background: #f1f1f1; }
.scroll svg { width: 15px; height: 16px; }
.scroll i { height: 68%; background: #c1c1c1; margin: 0 1px; }
.modal-foot { height: 54px; flex: none; display: flex; justify-content: flex-end; align-items: center; gap: 5px; padding: 0 12px; border-top: 1px solid #dee2e6; }
.btn { display: flex; align-items: center; gap: 2px; height: 29px; padding: 0 9px; border-radius: 5px; color: #fff; }
.grey { background: #6c757d; }
.blue { background: #0d6efd; }

.taskbar { height: 37px; flex: none; display: flex; align-items: center; gap: 4px; background: radial-gradient(ellipse at 62% 60%, #302a2b, transparent 22%), radial-gradient(ellipse at 15% 60%, #14201f, transparent 20%), #0d0f10; border-top: 1px solid #55595a; }
.start { width: 52px; height: 36px; display: grid; place-items: center; }
.start svg { width: 36px; height: 36px; }
.task { position: relative; width: 54px; height: 36px; display: grid; place-items: center; border: 1px solid transparent; border-radius: 3px; }
.task svg { width: 32px; height: 31px; }
.open { border-color: #777; background: linear-gradient(150deg, #777, #292929 60%, #3d3d3d); }
.lit { background: linear-gradient(150deg, #eee, #999 60%, #aaa); border-right: 4px double #bbb; }
.task em { position: absolute; right: 11px; bottom: 1px; padding: 0 1px; background: #ed4b48; border-radius: 2px; color: #fff; font: 8px/11px "Noto Sans", sans-serif; }
.logo { font: 700 14px "Liberation Sans", sans-serif; fill: #fff; }
.cloud { font: 700 7px "Liberation Sans", sans-serif; fill: #1f5fc4; }
.mini { font: 7px "Liberation Sans", sans-serif; fill: #fff; }
.lang { color: #eee; font-size: 11px; margin-right: 8px; padding-bottom: 4px; }
.tray { display: flex; gap: 6px; margin-right: 8px; }
.tray svg { width: 16px; height: 16px; }
.clock { width: 60px; display: flex; flex-direction: column; text-align: center; color: #fff; font-size: 11px; line-height: 16px; }
.desk { width: 12px; height: 35px; margin: 0 2px; border: 1px solid #555; background: linear-gradient(160deg, #777, #111 60%); }
</style>
